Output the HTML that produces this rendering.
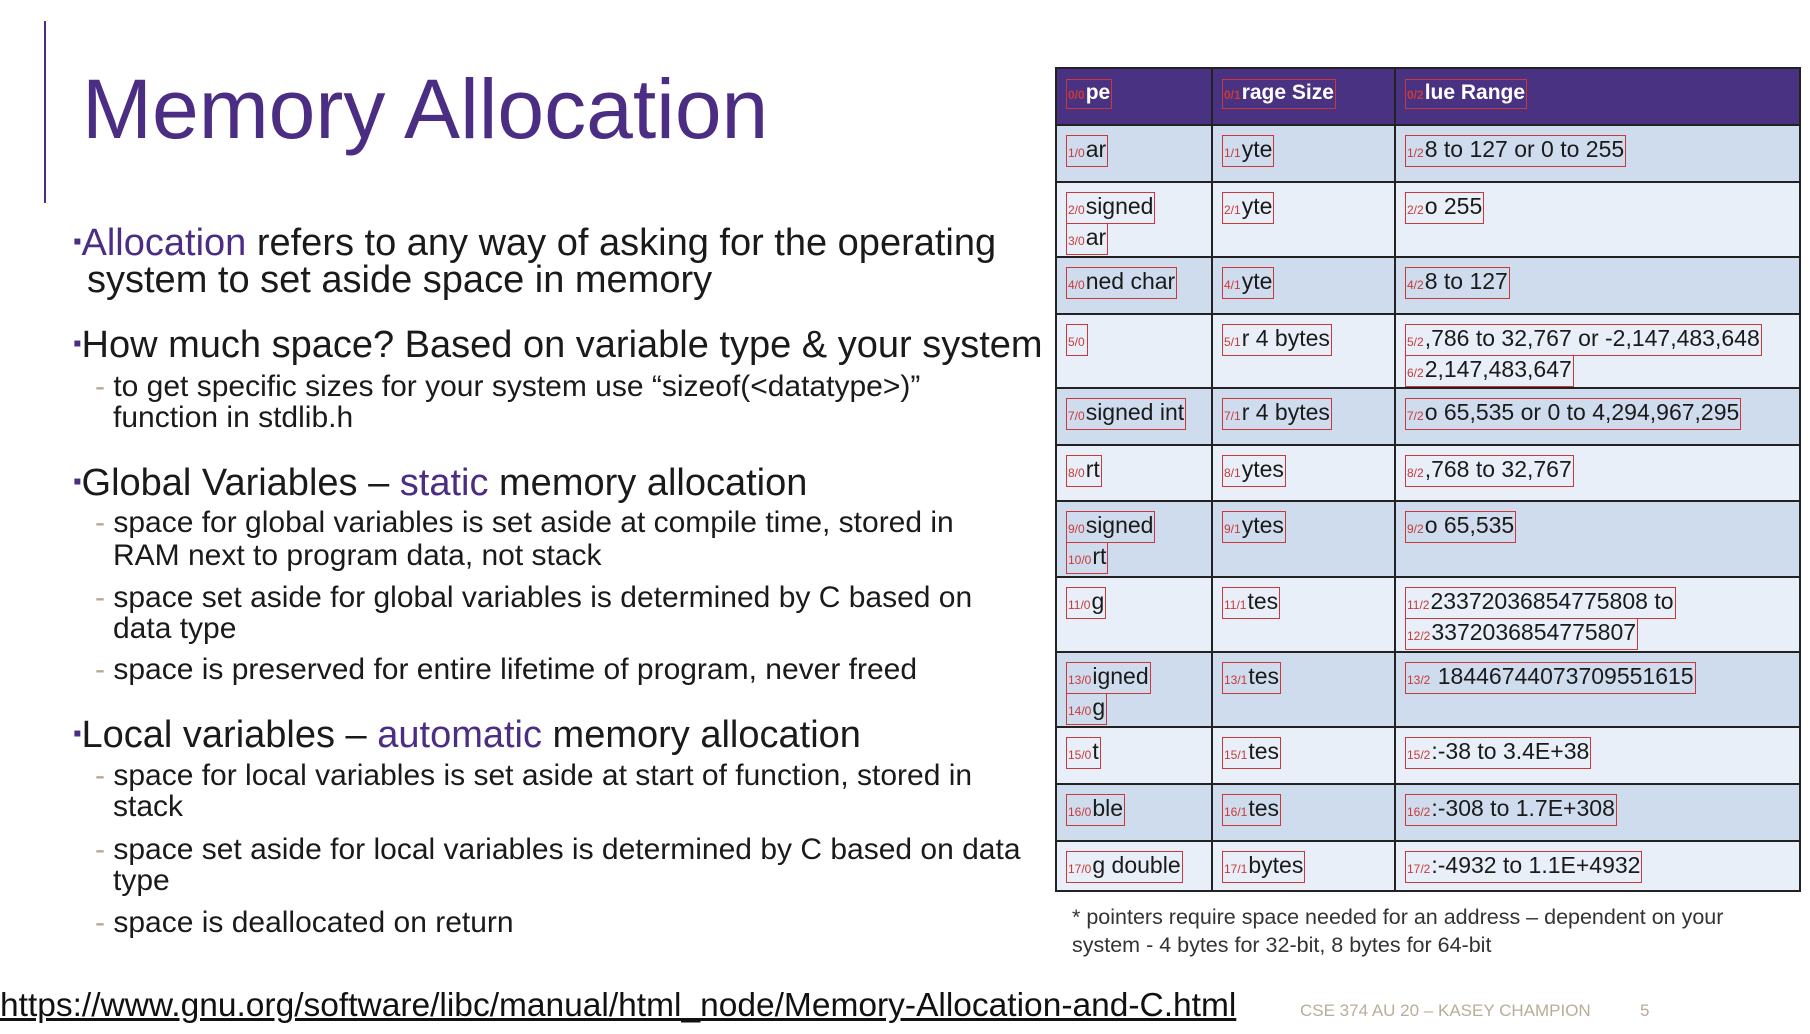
<!DOCTYPE html>
<html><head><meta charset="utf-8"><style>
*{margin:0;padding:0;box-sizing:border-box}
body{width:1810px;height:1034px;background:#fff;position:relative;overflow:hidden;font-family:"Liberation Sans",sans-serif;color:#1a1a1a}
.a{position:absolute;white-space:nowrap}
.b{font-size:38px;line-height:40px}
.s{font-size:30px;line-height:32px}
.p{color:#4b2e83}
.d{color:#b8a98a}
.sq{font-size:24px;vertical-align:6px;color:#4b2e83}
table{position:absolute;left:1055px;top:67px;width:746px;border-collapse:collapse;font-size:23px;table-layout:fixed}
td{border:2px solid #222;vertical-align:top;padding:8px 8px 0 9px;white-space:nowrap;overflow:hidden}
td div{height:31px;line-height:31px}
tr.h td{background:#4a3282;color:#fff;font-weight:bold;font-size:21px}
tr.k td{background:#cfdcee}
tr.l td{background:#e8eff8}
.r{border:1.5px solid #c83a3a;padding:0 1px;line-height:26px;display:inline-block}
.r i{font-style:normal;color:#c83a3a;font-size:12px;margin-right:1px}
</style></head><body>
<div class="a" style="left:44px;top:21px;width:2px;height:182px;background:#4b2e83"></div>
<div class="a p" style="left:82px;top:64px;font-size:84px;line-height:90px">Memory Allocation</div>

<div class="a b" style="left:73px;top:222px"><span class="sq">▪</span><span class="p">Allocation</span> refers to any way of asking for the operating</div>
<div class="a b" style="left:87px;top:260px">system to set aside space in memory</div>
<div class="a b" style="left:73px;top:324px"><span class="sq">▪</span>How much space? Based on variable type &amp; your system</div>
<div class="a s" style="left:95px;top:371px"><span class="d">- </span>to get specific sizes for your system use “sizeof(&lt;datatype&gt;)”</div>
<div class="a s" style="left:113px;top:402px">function in stdlib.h</div>
<div class="a b" style="left:73px;top:462px"><span class="sq">▪</span>Global Variables – <span class="p">static</span> memory allocation</div>
<div class="a s" style="left:95px;top:507px"><span class="d">- </span>space for global variables is set aside at compile time, stored in</div>
<div class="a s" style="left:113px;top:540px">RAM next to program data, not stack</div>
<div class="a s" style="left:95px;top:582px"><span class="d">- </span>space set aside for global variables is determined by C based on</div>
<div class="a s" style="left:113px;top:613px">data type</div>
<div class="a s" style="left:95px;top:654px"><span class="d">- </span>space is preserved for entire lifetime of program, never freed</div>
<div class="a b" style="left:73px;top:714px"><span class="sq">▪</span>Local variables – <span class="p">automatic</span> memory allocation</div>
<div class="a s" style="left:95px;top:760px"><span class="d">- </span>space for local variables is set aside at start of function, stored in</div>
<div class="a s" style="left:113px;top:791px">stack</div>
<div class="a s" style="left:95px;top:834px"><span class="d">- </span>space set aside for local variables is determined by C based on data</div>
<div class="a s" style="left:113px;top:865px">type</div>
<div class="a s" style="left:95px;top:907px"><span class="d">- </span>space is deallocated on return</div>

<div class="a" style="left:0;top:987px;font-size:33.5px;line-height:38px;text-decoration:underline;color:#111">https://www.gnu.org/software/libc/manual/html_node/Memory-Allocation-and-C.html</div>
<div class="a" style="left:1300px;top:1001px;font-size:17px;color:#b8ad98">CSE 374 AU 20 – KASEY CHAMPION</div>
<div class="a" style="left:1640px;top:1001px;font-size:17px;color:#b8ad98">5</div>

<div class="a" style="left:1072px;top:903px;font-size:21.5px;line-height:28px;color:#333">* pointers require space needed for an address – dependent on your<br>system - 4 bytes for 32-bit, 8 bytes for 64-bit</div>

<table>
<colgroup><col style="width:156px"><col style="width:183px"><col></colgroup>
<tr class="h" style="height:57px"><td><div><span class="r"><i>0/0</i>pe</span></div></td><td><div><span class="r"><i>0/1</i>rage Size</span></div></td><td><div><span class="r"><i>0/2</i>lue Range</span></div></td></tr>
<tr class="k" style="height:57px"><td><div><span class="r"><i>1/0</i>ar</span></div></td><td><div><span class="r"><i>1/1</i>yte</span></div></td><td><div><span class="r"><i>1/2</i>8 to 127 or 0 to 255</span></div></td></tr>
<tr class="l" style="height:75px"><td><div><span class="r"><i>2/0</i>signed</span></div><div><span class="r"><i>3/0</i>ar</span></div></td><td><div><span class="r"><i>2/1</i>yte</span></div></td><td><div><span class="r"><i>2/2</i>o 255</span></div></td></tr>
<tr class="k" style="height:57px"><td><div><span class="r"><i>4/0</i>ned char</span></div></td><td><div><span class="r"><i>4/1</i>yte</span></div></td><td><div><span class="r"><i>4/2</i>8 to 127</span></div></td></tr>
<tr class="l" style="height:74px"><td><div><span class="r"><i>5/0</i></span></div></td><td><div><span class="r"><i>5/1</i>r 4 bytes</span></div></td><td><div><span class="r"><i>5/2</i>,786 to 32,767 or -2,147,483,648</span></div><div><span class="r"><i>6/2</i>2,147,483,647</span></div></td></tr>
<tr class="k" style="height:57px"><td><div><span class="r"><i>7/0</i>signed int</span></div></td><td><div><span class="r"><i>7/1</i>r 4 bytes</span></div></td><td><div><span class="r"><i>7/2</i>o 65,535 or 0 to 4,294,967,295</span></div></td></tr>
<tr class="l" style="height:56px"><td><div><span class="r"><i>8/0</i>rt</span></div></td><td><div><span class="r"><i>8/1</i>ytes</span></div></td><td><div><span class="r"><i>8/2</i>,768 to 32,767</span></div></td></tr>
<tr class="k" style="height:76px"><td><div><span class="r"><i>9/0</i>signed</span></div><div><span class="r"><i>10/0</i>rt</span></div></td><td><div><span class="r"><i>9/1</i>ytes</span></div></td><td><div><span class="r"><i>9/2</i>o 65,535</span></div></td></tr>
<tr class="l" style="height:75px"><td><div><span class="r"><i>11/0</i>g</span></div></td><td><div><span class="r"><i>11/1</i>tes</span></div></td><td><div><span class="r"><i>11/2</i>23372036854775808 to</span></div><div><span class="r"><i>12/2</i>3372036854775807</span></div></td></tr>
<tr class="k" style="height:75px"><td><div><span class="r"><i>13/0</i>igned</span></div><div><span class="r"><i>14/0</i>g</span></div></td><td><div><span class="r"><i>13/1</i>tes</span></div></td><td><div><span class="r"><i>13/2</i> 18446744073709551615</span></div></td></tr>
<tr class="l" style="height:57px"><td><div><span class="r"><i>15/0</i>t</span></div></td><td><div><span class="r"><i>15/1</i>tes</span></div></td><td><div><span class="r"><i>15/2</i>:-38 to 3.4E+38</span></div></td></tr>
<tr class="k" style="height:57px"><td><div><span class="r"><i>16/0</i>ble</span></div></td><td><div><span class="r"><i>16/1</i>tes</span></div></td><td><div><span class="r"><i>16/2</i>:-308 to 1.7E+308</span></div></td></tr>
<tr class="l" style="height:50px"><td><div><span class="r"><i>17/0</i>g double</span></div></td><td><div><span class="r"><i>17/1</i>bytes</span></div></td><td><div><span class="r"><i>17/2</i>:-4932 to 1.1E+4932</span></div></td></tr>
</table>
</body></html>
